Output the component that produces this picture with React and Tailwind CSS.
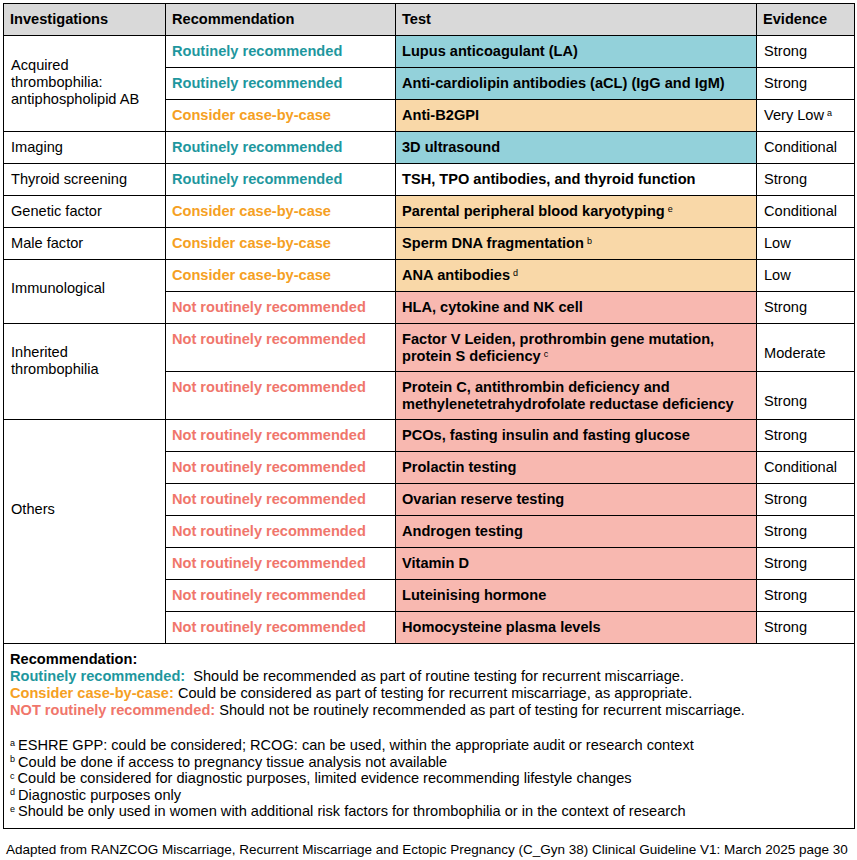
import React from "react";

const TEAL = "text-[#1e979e]";
const ORANGE = "text-[#f5a023]";
const RED = "text-[#f0766b]";

const recStyles = {
  r: { label: "Routinely recommended", text: TEAL, bg: "bg-[#93d1da]" },
  c: { label: "Consider case-by-case", text: ORANGE, bg: "bg-[#f9d8a8]" },
  n: { label: "Not routinely recommended", text: RED, bg: "bg-[#f8b8b0]" },
};

const groups = [
  {
    name: ["Acquired", "thrombophilia:", "antiphospholipid AB"],
    pad: "pt-[21px]",
    rows: [
      { rec: "r", test: "Lupus anticoagulant (LA)", ev: "Strong" },
      { rec: "r", test: "Anti-cardiolipin antibodies (aCL) (IgG and IgM)", ev: "Strong" },
      { rec: "c", test: "Anti-B2GPI", ev: "Very Low", evSup: "a" },
    ],
  },
  { name: ["Imaging"], pad: "pt-[7px]", rows: [{ rec: "r", test: "3D ultrasound", ev: "Conditional" }] },
  {
    name: ["Thyroid screening"],
    pad: "pt-[7px]",
    rows: [{ rec: "r", test: "TSH, TPO antibodies, and thyroid function", ev: "Strong", white: true }],
  },
  {
    name: ["Genetic factor"],
    pad: "pt-[7px]",
    rows: [{ rec: "c", test: "Parental peripheral blood karyotyping", sup: "e", ev: "Conditional" }],
  },
  {
    name: ["Male factor"],
    pad: "pt-[7px]",
    rows: [{ rec: "c", test: "Sperm DNA fragmentation", sup: "b", ev: "Low" }],
  },
  {
    name: ["Immunological"],
    pad: "pt-[20px]",
    rows: [
      { rec: "c", test: "ANA antibodies", sup: "d", ev: "Low" },
      { rec: "n", test: "HLA, cytokine and NK cell", ev: "Strong" },
    ],
  },
  {
    name: ["Inherited", "thrombophilia"],
    pad: "pt-[20px]",
    rows: [
      {
        rec: "n",
        test: ["Factor V Leiden, prothrombin gene mutation,", "protein S deficiency"],
        sup: "c",
        ev: "Moderate",
      },
      {
        rec: "n",
        test: ["Protein C, antithrombin deficiency and", "methylenetetrahydrofolate reductase deficiency"],
        ev: "Strong",
      },
    ],
  },
  {
    name: ["Others"],
    pad: "pt-[81px]",
    rows: [
      { rec: "n", test: "PCOs, fasting insulin and fasting glucose", ev: "Strong" },
      { rec: "n", test: "Prolactin testing", ev: "Conditional" },
      { rec: "n", test: "Ovarian reserve testing", ev: "Strong" },
      { rec: "n", test: "Androgen testing", ev: "Strong" },
      { rec: "n", test: "Vitamin D", ev: "Strong" },
      { rec: "n", test: "Luteinising hormone", ev: "Strong" },
      { rec: "n", test: "Homocysteine plasma levels", ev: "Strong" },
    ],
  },
];

const footnotes = [
  ["a", "ESHRE GPP: could be considered; RCOG: can be used, within the appropriate audit or research context"],
  ["b", "Could be done if access to pregnancy tissue analysis not available"],
  ["c", "Could be considered for diagnostic purposes, limited evidence recommending lifestyle changes"],
  ["d", "Diagnostic purposes only"],
  ["e", "Should be only used in women with additional risk factors for thrombophilia or in the context of research"],
];

const border = "border border-black";
const cell = `${border} align-top`;

function Sup({ children }) {
  return <sup className="text-[9px] leading-none font-normal ml-[3px]">{children}</sup>;
}

function TestText({ row }) {
  if (Array.isArray(row.test)) {
    return (
      <>
        {row.test[0]}
        <br />
        {row.test[1]}
        {row.sup && <Sup>{row.sup}</Sup>}
      </>
    );
  }
  return (
    <>
      {row.test}
      {row.sup && <Sup>{row.sup}</Sup>}
    </>
  );
}

export default function App() {
  return (
    <div
      className="bg-white w-[857px] h-[860px] pt-[3px] pl-[3px] text-black"
      style={{ fontFamily: '"Liberation Sans", Arial, sans-serif' }}
    >
      <table className="border-collapse w-[851px] table-fixed text-[14.6px] leading-[17px]">
        <colgroup>
          <col className="w-[162px]" />
          <col className="w-[230px]" />
          <col className="w-[361px]" />
          <col className="w-[98px]" />
        </colgroup>
        <thead>
          <tr className="bg-[#d9d9d9] h-[32px] font-bold text-left">
            <th className={`${border} align-middle pl-[6px]`}>Investigations</th>
            <th className={`${border} align-middle pl-[6px]`}>Recommendation</th>
            <th className={`${border} align-middle pl-[6px]`}>Test</th>
            <th className={`${border} align-middle pl-[6px]`}>Evidence</th>
          </tr>
        </thead>
        <tbody>
          {groups.map((g, gi) =>
            g.rows.map((row, ri) => {
              const s = recStyles[row.rec];
              const two = Array.isArray(row.test);
              return (
                <tr key={`${gi}-${ri}`} className={two ? "h-[48px]" : "h-[32px]"}>
                  {ri === 0 && (
                    <td rowSpan={g.rows.length} className={`${cell} ${g.pad} pl-[7px]`}>
                      {g.name.map((n, i) => (
                        <div key={i}>{n}</div>
                      ))}
                    </td>
                  )}
                  <td className={`${cell} pt-[7px] pl-[6px] font-bold ${s.text}`}>{s.label}</td>
                  <td className={`${cell} pt-[7px] pl-[6px] font-bold ${row.white ? "bg-white" : s.bg}`}>
                    <TestText row={row} />
                  </td>
                  <td className={`${cell} ${two ? "pt-[21px]" : "pt-[7px]"} pl-[7px]`}>
                    {row.ev}
                    {row.evSup && <Sup>{row.evSup}</Sup>}
                  </td>
                </tr>
              );
            })
          )}
          <tr>
            <td colSpan={4} className={`${cell} pt-[7px] pb-[8px] pl-[6px]`}>
              <div className="font-bold">Recommendation:</div>
              <div>
                <span className={`font-bold ${TEAL}`}>Routinely recommended:</span>
                {"\u00a0 Should be recommended as part of routine testing for recurrent miscarriage."}
              </div>
              <div>
                <span className={`font-bold ${ORANGE}`}>Consider case-by-case:</span> Could be considered as part of
                testing for recurrent miscarriage, as appropriate.
              </div>
              <div>
                <span className={`font-bold ${RED}`}>NOT routinely recommended:</span> Should not be routinely
                recommended as part of testing for recurrent miscarriage.
              </div>
              <div className="h-[18px]" />
              {footnotes.map(([k, t]) => (
                <div key={k} className="leading-[16.5px]">
                  <sup className="text-[9px] leading-none mr-[3px]">{k}</sup>
                  {t}
                </div>
              ))}
            </td>
          </tr>
        </tbody>
      </table>
      <div className="text-[13.5px] leading-[17px] pt-[12px] pl-[3px] whitespace-nowrap">
        Adapted from RANZCOG Miscarriage, Recurrent Miscarriage and Ectopic Pregnancy (C_Gyn 38) Clinical Guideline V1:
        March 2025 page 30
      </div>
    </div>
  );
}
